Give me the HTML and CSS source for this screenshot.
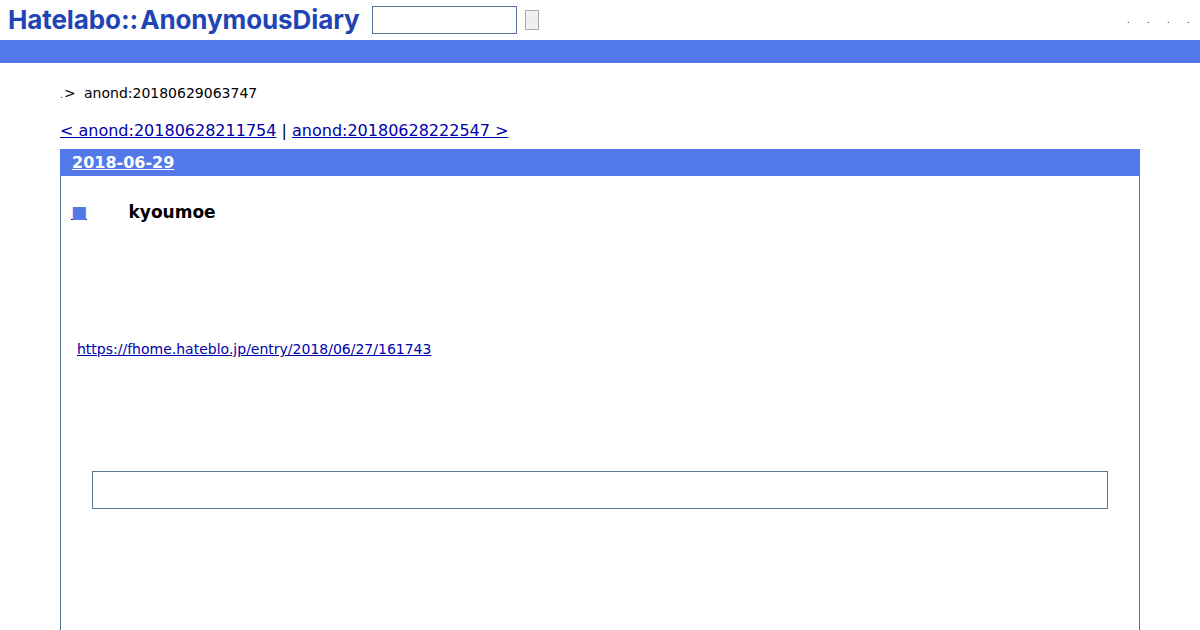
FILE: index.html
```html
<!DOCTYPE html>
<html lang="ja">
<head>
<meta charset="utf-8">
<title>anond:20180629063747</title>
<link rel="stylesheet" href="styles.css">
</head>
<body>
<header class="top">
  <a class="logo" href="#"><span class="logo-a">Hatelabo::</span>AnonymousDiary</a>
  <form class="search">
    <input class="search-input" type="text">
    <button class="search-btn" type="button"></button>
  </form>
  <nav class="tools">
    <a href="#">.</a><a href="#">.</a><a href="#">.</a><a href="#">.</a>
  </nav>
</header>
<div class="band"></div>
<main class="page">
  <p class="crumb"><span class="dot">.</span><span class="gt">&gt;</span><span class="crumb-id">anond:20180629063747</span></p>
  <p class="pager"><a href="#">&lt; anond:20180628211754</a> | <a href="#">anond:20180628222547 &gt;</a></p>
  <section class="day">
    <h2 class="day-head"><a href="#">2018-06-29</a></h2>
    <div class="day-body">
      <h3 class="entry-title"><a class="sq" href="#">■</a><span class="entry-name">kyoumoe</span></h3>
      <p class="entry-link"><a href="#">https://fhome.hateblo.jp/entry/2018/06/27/161743</a></p>
      <div class="quote"></div>
    </div>
  </section>
</main>
</body>
</html>
```
FILE: styles.css
```css
html, body {
  margin: 0;
  padding: 0;
  height: 630px;
  overflow: hidden;
  background: #fff;
  font-family: "DejaVu Sans", sans-serif;
  color: #000;
}
a { color: #0000aa; }
.top {
  height: 40px;
  display: flex;
  align-items: flex-start;
  position: relative;
}
.logo {
  font-family: "Inter", sans-serif;
  font-weight: 700;
  font-size: 26px;
  letter-spacing: -0.1px;
  line-height: 40px;
  color: #1f45b5;
  text-decoration: none;
  margin-left: 8px;
  width: 352px;
  white-space: nowrap;
}
.logo-a { margin-right: 2px; }
.search {
  display: flex;
  align-items: center;
  margin: 6px 0 0 12px;
}
.search-input {
  box-sizing: border-box;
  width: 145px;
  height: 28px;
  border: 1px solid #5a7399;
  padding: 0;
  margin: 0;
  background: #fff;
}
.search-btn {
  box-sizing: border-box;
  width: 14px;
  height: 20px;
  margin: 0 0 0 8px;
  padding: 0;
  border: 1px solid #a9a9a9;
  background: #efefef;
}
.tools {
  margin-left: auto;
  display: flex;
  gap: 18px;
  padding: 16px 11px 0 0;
}
.tools a {
  font-size: 8px;
  line-height: 10px;
  width: 2px;
  color: #000;
  text-decoration: none;
}
.band {
  height: 23px;
  background: #5279e7;
}
.page { padding: 0 60px; }
.crumb {
  margin: 0;
  padding-top: 22px;
  height: 17px;
  font-size: 14px;
  line-height: 17px;
  display: flex;
  align-items: baseline;
}
.dot { font-size: 8px; width: 4px; }
.gt { width: 20px; }
.pager {
  margin: 19px 0 0;
  font-size: 16px;
  line-height: 19px;
}
.day {
  margin-top: 9px;
  border: 1px solid #5a7399;
  border-top: 0;
  height: 481px;
  border-bottom: 0;
}
.day-head {
  margin: 0 -1px;
  padding-left: 12px;
  height: 27px;
  background: #5279e7;
  font-size: 16px;
  line-height: 27px;
  font-weight: 700;
}
.day-head a { color: #fff; }
.day-body { padding: 0 16px; }
.entry-title {
  margin: 0 0 0 -6px;
  padding-top: 26px;
  font-size: 17px;
  line-height: 21px;
  font-weight: 700;
  display: flex;
  align-items: baseline;
}
.sq {
  color: #5279e7;
  text-decoration-color: #0000aa;
  text-decoration-thickness: 1px;
  width: 57.5px;
  white-space: nowrap;
}
.entry-link {
  margin: 118px 0 0;
  font-size: 14px;
  line-height: 17px;
}
.quote {
  box-sizing: border-box;
  margin: 113px 15px 0;
  height: 38px;
  border: 1px solid #5a7399;
}
```
